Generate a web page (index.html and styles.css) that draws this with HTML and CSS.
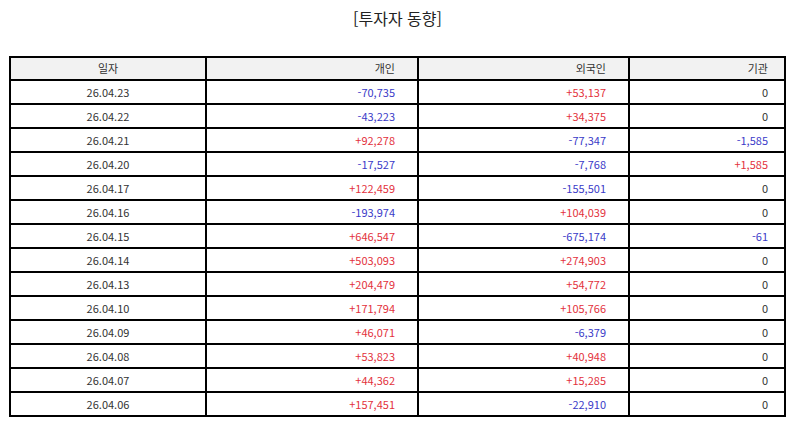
FILE: index.html
```html
<!DOCTYPE html>
<html lang="ko">
<head>
<meta charset="utf-8">
<title>투자자 동향</title>
<link rel="stylesheet" href="styles.css">
</head>
<body>
<div class="page">
  <h1 class="title">[투자자 동향]</h1>
  <table class="trend">
    <colgroup>
      <col class="c-date">
      <col class="c-ind">
      <col class="c-for">
      <col class="c-inst">
    </colgroup>
    <thead>
      <tr><th class="date">일자</th><th class="num">개인</th><th class="num">외국인</th><th class="num last">기관</th></tr>
    </thead>
    <tbody>
      <tr><td class="date">26.04.23</td><td class="num dn">-70,735</td><td class="num up">+53,137</td><td class="num last">0</td></tr>
      <tr><td class="date">26.04.22</td><td class="num dn">-43,223</td><td class="num up">+34,375</td><td class="num last">0</td></tr>
      <tr><td class="date">26.04.21</td><td class="num up">+92,278</td><td class="num dn">-77,347</td><td class="num last dn">-1,585</td></tr>
      <tr><td class="date">26.04.20</td><td class="num dn">-17,527</td><td class="num dn">-7,768</td><td class="num last up">+1,585</td></tr>
      <tr><td class="date">26.04.17</td><td class="num up">+122,459</td><td class="num dn">-155,501</td><td class="num last">0</td></tr>
      <tr><td class="date">26.04.16</td><td class="num dn">-193,974</td><td class="num up">+104,039</td><td class="num last">0</td></tr>
      <tr><td class="date">26.04.15</td><td class="num up">+646,547</td><td class="num dn">-675,174</td><td class="num last dn">-61</td></tr>
      <tr><td class="date">26.04.14</td><td class="num up">+503,093</td><td class="num up">+274,903</td><td class="num last">0</td></tr>
      <tr><td class="date">26.04.13</td><td class="num up">+204,479</td><td class="num up">+54,772</td><td class="num last">0</td></tr>
      <tr><td class="date">26.04.10</td><td class="num up">+171,794</td><td class="num up">+105,766</td><td class="num last">0</td></tr>
      <tr><td class="date">26.04.09</td><td class="num up">+46,071</td><td class="num dn">-6,379</td><td class="num last">0</td></tr>
      <tr><td class="date">26.04.08</td><td class="num up">+53,823</td><td class="num up">+40,948</td><td class="num last">0</td></tr>
      <tr><td class="date">26.04.07</td><td class="num up">+44,362</td><td class="num up">+15,285</td><td class="num last">0</td></tr>
      <tr><td class="date">26.04.06</td><td class="num up">+157,451</td><td class="num dn">-22,910</td><td class="num last">0</td></tr>
    </tbody>
  </table>
</div>
</body>
</html>
```

FILE: styles.css
```css
html, body {
  margin: 0;
  padding: 0;
  background: #fff;
}
.page {
  padding: 8px 9px 0 9px;
  font-family: "Noto Sans CJK KR", "Noto Sans", sans-serif;
  color: #333;
}
.title {
  margin: 0 0 28px 0;
  font-size: 16px;
  line-height: 20px;
  font-weight: normal;
  text-align: center;
  color: #222;
}
.trend {
  width: 777px;
  border-collapse: collapse;
  table-layout: fixed;
  font-size: 11px;
}
.c-date { width: 196px; }
.c-ind { width: 212px; }
.c-for { width: 211px; }
.c-inst { width: 156px; }
.trend th, .trend td {
  border: 2px solid #000;
  padding: 0;
  font-weight: normal;
  white-space: nowrap;
}
.trend th {
  background: #f2f2f2;
  height: 21px;
  line-height: 21px;
  color: #333;
}
.trend td {
  height: 22px;
  line-height: 22px;
}
.date { text-align: center; }
.num { text-align: right; padding-right: 22px !important; }
.num.last { padding-right: 16px !important; }
.up { color: #e3313c; }
.dn { color: #3a3ac8; }
```
